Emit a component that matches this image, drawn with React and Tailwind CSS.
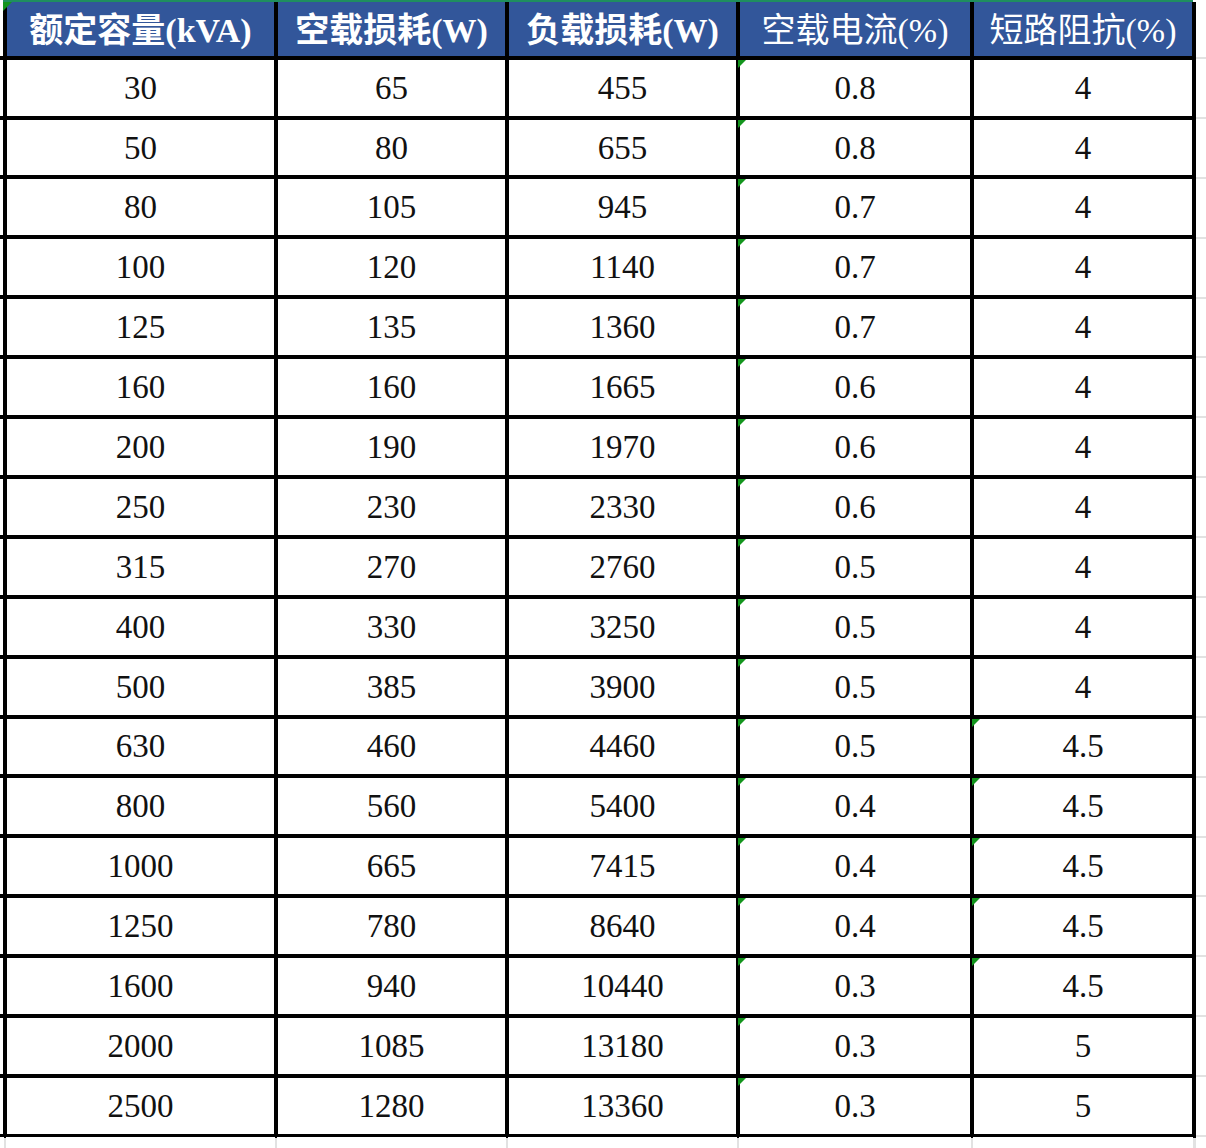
import React from 'react';

const headers = [
  { label: '额定容量(kVA)', bold: true },
  { label: '空载损耗(W)', bold: true },
  { label: '负载损耗(W)', bold: true },
  { label: '空载电流(%)', bold: false },
  { label: '短路阻抗(%)', bold: false },
];

const rows = [
  ['30', '65', '455', '0.8', '4'],
  ['50', '80', '655', '0.8', '4'],
  ['80', '105', '945', '0.7', '4'],
  ['100', '120', '1140', '0.7', '4'],
  ['125', '135', '1360', '0.7', '4'],
  ['160', '160', '1665', '0.6', '4'],
  ['200', '190', '1970', '0.6', '4'],
  ['250', '230', '2330', '0.6', '4'],
  ['315', '270', '2760', '0.5', '4'],
  ['400', '330', '3250', '0.5', '4'],
  ['500', '385', '3900', '0.5', '4'],
  ['630', '460', '4460', '0.5', '4.5'],
  ['800', '560', '5400', '0.4', '4.5'],
  ['1000', '665', '7415', '0.4', '4.5'],
  ['1250', '780', '8640', '0.4', '4.5'],
  ['1600', '940', '10440', '0.3', '4.5'],
  ['2000', '1085', '13180', '0.3', '5'],
  ['2500', '1280', '13360', '0.3', '5'],
];

// excel "number stored as text" marker
function Marker({ className = '' }) {
  return (
    <span
      className={`absolute top-0 w-0 h-0 border-t-[8px] border-t-[#13951d] border-r-[8px] border-r-transparent ${className}`}
    />
  );
}

const cols = 'grid grid-cols-[3px_267px_227px_227px_230px_218px]';

function App() {
  return (
    <div
      className="w-[1206px] h-[1148px] bg-white overflow-hidden flex"
      style={{ fontFamily: "'Liberation Serif', 'Noto Sans CJK SC', serif" }}
    >
      <div className="w-[1196px] flex flex-col">
        <div className="h-[2px] ml-[3px] w-[1190px] bg-[#1f8f5f]" />
        <div className={`${cols} gap-[4px] pr-[4px] pb-[4px] bg-black`}>
          <div className="bg-white h-[54px]" />
          {headers.map((h, i) => (
            <div
              key={h.label}
              className={`relative h-[54px] pt-[5px] bg-[#32569a] text-white flex items-center justify-center text-[34px] leading-none ${h.bold ? 'font-bold' : 'font-normal'}`}
            >
              {i === 0 && <Marker className="-left-[4px] border-t-[9px] border-r-[9px]" />}
              {h.label}
            </div>
          ))}

          {rows.map((r, ri) => (
            <React.Fragment key={ri}>
              <div className="bg-white h-[55.9px]" />
              {r.map((v, ci) => (
                <div
                  key={ci}
                  className="relative bg-white h-[55.9px] pt-[1px] flex items-center justify-center text-[33px] leading-none text-[#111]"
                >
                  {(ci === 3 || (ci === 4 && v === '4.5')) && <Marker className="-left-[2px]" />}
                  {v}
                </div>
              ))}
            </React.Fragment>
          ))}
        </div>
        <div className={`${cols} gap-x-[4px] pr-[4px] h-[12px] bg-[#e2e2e2]`}>
          {[0, 1, 2, 3, 4, 5].map((i) => (
            <div key={i} className="bg-white shadow-[0_0_0_1px_white]" />
          ))}
        </div>
      </div>

      {/* spreadsheet gridlines to the right of the table */}
      <div className="w-[10px] flex flex-col">
        <div className="h-[56px]" />
        {rows.map((_, i) => (
          <React.Fragment key={i}>
            <div className="h-[4px] flex items-center">
              <div className="h-[2px] w-full bg-[#e2e2e2]" />
            </div>
            <div className="h-[55.9px]" />
          </React.Fragment>
        ))}
        <div className="h-[4px] flex items-center">
          <div className="h-[2px] w-full bg-[#e2e2e2]" />
        </div>
      </div>
    </div>
  );
}

export default App;
